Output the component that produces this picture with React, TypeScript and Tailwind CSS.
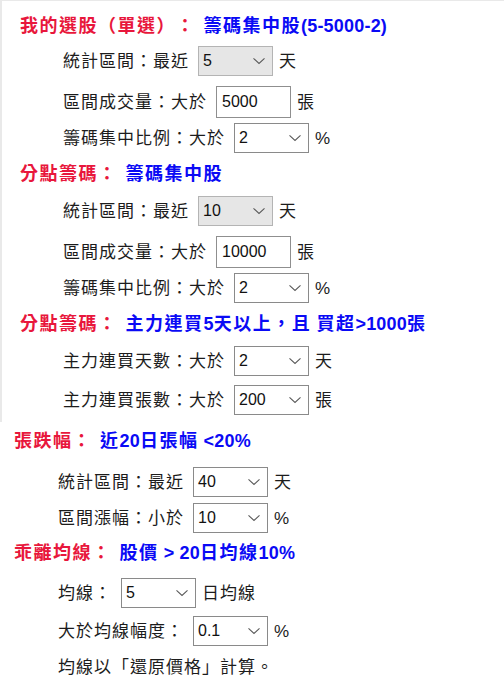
import React from "react";

const FONT = { fontFamily: '"Liberation Sans", "Noto Sans CJK TC", sans-serif' };

function Chevron() {
  return (
    <svg width="12" height="7" viewBox="0 0 12 7" className="absolute right-[7px] top-1/2 -translate-y-1/2">
      <polyline points="0.5,0.8 6,6 11.5,0.8" fill="none" stroke="#5a5a5a" strokeWidth="1.1" />
    </svg>
  );
}

function Select({ value, gray }: { value: string; gray?: boolean }) {
  return (
    <div
      className={
        "relative flex h-[30px] w-[75px] items-center pl-[4px] text-[16px] tracking-normal text-[#111] " +
        (gray ? "border border-[#b4b4b4] bg-[#e6e6e6]" : "border border-[#8a8a8a] bg-white")
      }
    >
      <span className="leading-none">{value}</span>
      <Chevron />
    </div>
  );
}

function Input({ value }: { value: string }) {
  return (
    <div className="flex h-[32px] w-[75px] items-center border border-[#8f8f8f] bg-white pl-[5px] text-[16px] tracking-normal text-[#111]">
      <span className="leading-none">{value}</span>
    </div>
  );
}

function Mixed({ text }: { text: string }) {
  const parts = text.split(/([\x20-\x7e]+)/).filter((p) => p.length > 0);
  return (
    <>
      {parts.map((p, i) =>
        /^[\x20-\x7e]+$/.test(p) ? (
          <span key={i} className="tracking-[0.2px]">
            {p}
          </span>
        ) : (
          <span key={i}>{p}</span>
        )
      )}
    </>
  );
}

function Heading({ red, blue, className }: { red: string; blue: string; className?: string }) {
  return (
    <div
      className={
        "flex h-9 items-center whitespace-pre text-[18px] font-bold leading-none tracking-[1.5px] [text-spacing-trim:space-all] " +
        (className || "")
      }
    >
      <span className="text-[#e8173c]">{red}</span>
      <span className="ml-[8px] text-[#0a0af5]">
        <Mixed text={blue} />
      </span>
    </div>
  );
}

function Row({
  label,
  children,
  unit,
  className,
}: {
  label: string;
  children?: React.ReactNode;
  unit?: string;
  className?: string;
}) {
  return (
    <div
      className={
        "flex h-9 items-center whitespace-nowrap text-[17px] leading-none text-[#1c1c1c] [text-spacing-trim:space-all] " +
        (className || "")
      }
    >
      <span className="mr-[9px] tracking-[1px]">{label}</span>
      {children}
      {unit && <span className="ml-[6px] tracking-[1px]">{unit}</span>}
    </div>
  );
}

export default function App() {
  return (
    <div className="h-[694px] w-[504px] overflow-hidden bg-white" style={FONT}>
      <div className="flex h-[422px] flex-col border-l-2 border-t border-[#e9e9e9] pl-[18px] pt-[7px]">
        <Heading red="我的選股（單選）：" blue="籌碼集中股(5-5000-2)" />
        <Row className="ml-[43px] mt-[-1px]" label="統計區間：最近" unit="天">
          <Select value="5" gray />
        </Row>
        <Row className="ml-[43px] mt-[5px]" label="區間成交量：大於" unit="張">
          <Input value="5000" />
        </Row>
        <Row className="ml-[43px]" label="籌碼集中比例：大於" unit="%">
          <Select value="2" />
        </Row>
        <Heading red="分點籌碼：" blue="籌碼集中股" />
        <Row className="ml-[43px] mt-[1px]" label="統計區間：最近" unit="天">
          <Select value="10" gray />
        </Row>
        <Row className="ml-[43px] mt-[5px]" label="區間成交量：大於" unit="張">
          <Input value="10000" />
        </Row>
        <Row className="ml-[43px]" label="籌碼集中比例：大於" unit="%">
          <Select value="2" />
        </Row>
        <Heading red="分點籌碼：" blue="主力連買5天以上，且 買超>1000張" />
        <Row className="ml-[43px] mt-[1px]" label="主力連買天數：大於" unit="天">
          <Select value="2" />
        </Row>
        <Row className="ml-[43px] mt-[3px]" label="主力連買張數：大於" unit="張">
          <Select value="200" />
        </Row>
      </div>
      <div className="flex flex-col pl-[14px] pt-[1px]">
        <Heading red="張跌幅：" blue="近20日張幅 <20%" />
        <Row className="ml-[44px] mt-[5px]" label="統計區間：最近" unit="天">
          <Select value="40" />
        </Row>
        <Row className="ml-[44px]" label="區間漲幅：小於" unit="%">
          <Select value="10" />
        </Row>
        <Heading className="mt-[-1px]" red="乖離均線：" blue="股價 > 20日均線10%" />
        <Row className="ml-[44px] mt-[4px]" label="均線：" unit="日均線">
          <Select value="5" />
        </Row>
        <Row className="ml-[44px] mt-[2px]" label="大於均線幅度：" unit="%">
          <Select value="0.1" />
        </Row>
        <Row className="ml-[44px]" label="均線以「還原價格」計算。" />
      </div>
    </div>
  );
}
